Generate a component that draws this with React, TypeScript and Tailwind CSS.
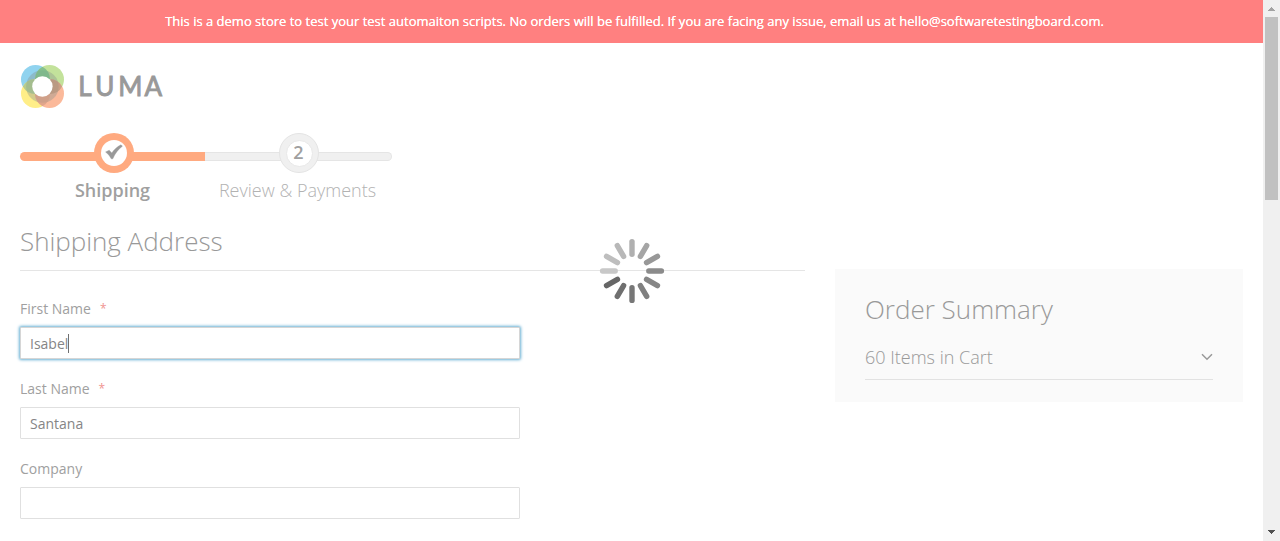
import React from "react";

const spokes = ["#8b8b8b", "#868686", "#808080", "#777777", "#6f6f6f", "#666666", "#c8c8c8", "#bebebe", "#b8b8b8", "#b0b0b0", "#a5a5a5", "#989898"];

function Logo() {
  return (
    <svg className="block" width="150" height="50" viewBox="20 62 150 50" role="img" aria-label="Luma">
      <circle cx="35.5" cy="79.5" r="14.5" fill="#90d3ef" />
      <circle cx="49.5" cy="79.5" r="14.5" fill="#c3e29b" />
      <circle cx="35.5" cy="93.5" r="14.5" fill="#ffee88" />
      <circle cx="49.5" cy="93.5" r="14.5" fill="#fbb99a" />
      <circle cx="42.4" cy="86.5" r="16.3" fill="#88948e" fillOpacity="0.38" />
      <path d="M42.5 66.8a14.5 14.5 0 0 1 0 25.4a14.5 14.5 0 0 1 0-25.4z" fill="#70b488" fillOpacity="0.75" />
      <path d="M42.5 80.8a14.5 14.5 0 0 1 0 25.4a14.5 14.5 0 0 1 0-25.4z" fill="#d09a82" fillOpacity="0.6" />
      <path d="M22.8 86.5a14.5 14.5 0 0 1 25.4 0a14.5 14.5 0 0 1-25.4 0z" fill="#86b492" fillOpacity="0.6" />
      <path d="M36.8 86.5a14.5 14.5 0 0 1 25.4 0a14.5 14.5 0 0 1-25.4 0z" fill="#ac9078" fillOpacity="0.6" />
      <circle cx="42.4" cy="86.5" r="10.2" fill="#fff" />
      <text x="78.2 95.3 118.2 144.6" y="95.6" fill="#999" stroke="#999" strokeWidth="0.9" fontFamily="Lato, sans-serif" fontWeight="400" fontSize="26">LUMA</text>
    </svg>
  );
}

function Spinner() {
  return (
    <svg className="absolute left-[599px] top-[238px]" width="66" height="66" viewBox="-33 -33 66 66">
      {spokes.map((c, i) => (
        <line key={i} x1="16.8" y1="0" x2="29.4" y2="0" stroke={c} strokeWidth="5.4" strokeLinecap="round" transform={`rotate(${i * 30})`} />
      ))}
    </svg>
  );
}

function Field({ label, value, required, focused }: { label: string; value: string; required?: boolean; focused?: boolean }) {
  return (
    <div className="mb-5 h-[60px] w-[500px]">
      <div className="mb-2 flex h-5 items-center text-[14px] leading-5 text-[#a0a0a0]">
        {label}
        {required && <span className="ml-[9px] text-[12px] text-[#f09490]">*</span>}
      </div>
      <div className={`flex h-8 items-center rounded-[1px] border bg-white px-[9px] text-[14px] text-[#858585] ${focused ? "border-[#d6d6d6] shadow-[0_0_3px_1px_#68b0d4]" : "border-[#e0e0e0]"}`}>
        <span>{value}</span>
        {focused && <span className="h-[19px] w-px bg-[#707070]" />}
      </div>
    </div>
  );
}

export default function App() {
  return (
    <div className="relative flex h-[541px] overflow-hidden bg-white font-['Open_Sans',sans-serif]">
      <div className="w-[1263px]">
        <div className="flex h-[43px] items-center justify-center bg-[#ff8080] pl-[6px] text-[13px] text-white [text-shadow:0_0_0.4px_#fff]">
          <span className="whitespace-nowrap">This is a demo store to test your test automaiton scripts. No orders will be fulfilled. If you are facing any issue, email us at hello@softwaretestingboard.com.</span>
        </div>
        <header className="h-[90px] pl-5 pt-[19px]">
          <Logo />
        </header>
        <div className="flex h-[94px] pl-5">
          <div className="relative w-[185px] pt-[19px] text-center">
            <div className="h-[9px] rounded-l-[6px] bg-[#ffaa80]" />
            <div className="absolute left-[74px] top-0 flex size-10 items-center justify-center rounded-full bg-[#ffaa80]">
              <div className="flex size-[26px] items-center justify-center rounded-full bg-white">
                <svg className="mb-[2px] mr-px" width="18" height="16" viewBox="0 0 18 16"><path d="M0.6 8L4.2 6.2L6.8 9C9 5.8 12.3 2.6 16 0.8L17.4 2.2C13.3 5.2 10 9.4 7.8 14.8H6.2C4.8 12 3 9.8 0.6 8Z" fill="#999" stroke="#999" strokeWidth="0.4" /></svg>
              </div>
            </div>
            <div className="mt-[16px] text-[18px] font-semibold leading-[26px] text-[#a0a0a0]">Shipping</div>
          </div>
          <div className="relative w-[187px] pt-[19px] text-center">
            <div className="h-[9px] rounded-r-[6px] border-y border-r border-[#e5e5e5] bg-[#f0f0f0]" />
            <div className="absolute left-[74px] top-0 flex size-10 items-center justify-center rounded-full border border-[#e4e4e4] bg-[#f0f0f0]">
              <div className="flex size-[27px] items-center justify-center rounded-full border border-[#e8e8e8] bg-white pr-px text-[18px] font-semibold text-[#a0a0a0]"><span className="-mt-[2px]">2</span></div>
            </div>
            <div className="mt-[16px] whitespace-nowrap pr-[2px] text-[18px] font-light leading-[26px] text-[#b2b2b2]">Review &amp; Payments</div>
          </div>
        </div>
        <div className="flex gap-[30px] pl-5">
          <main className="w-[785px]">
            <h2 className="mb-[28px] h-[44px] border-b border-[#e5e5e5] text-[26px] font-light leading-[29px] tracking-[-0.03px] text-[#999]">Shipping Address</h2>
            <Field label="First Name" value="Isabel" required focused />
            <Field label="Last Name" value="Santana" required />
            <Field label="Company" value="" />
          </main>
          <aside className="mt-[42px] h-[133px] w-[408px] bg-[#fafafa] px-[30px] pt-[22px]">
            <h2 className="text-[26px] font-light leading-[36px] text-[#999]">Order Summary</h2>
            <div className="mt-[7px] flex h-[46px] items-center justify-between border-b border-[#e2e2e2] pt-[2px] text-[18px] font-light text-[#999]">
              <span>60 Items in Cart</span>
              <svg className="mb-[2px]" width="12" height="8" viewBox="0 0 12 8"><path d="M1 1.2L6 6.2L11 1.2" fill="none" stroke="#999" strokeWidth="1.5" /></svg>
            </div>
          </aside>
        </div>
      </div>
      <div className="flex w-[17px] flex-col items-center bg-[#f0f0f0]">
        <svg className="block h-[17px] w-[17px] shrink-0" viewBox="0 0 17 17" shapeRendering="crispEdges"><path d="M5 11V10h1V9h1V8h1V7h1v1h1v1h1v1h1v1z" fill="#a3a3a3" /></svg>
        <div className="h-[183px] w-[13px] shrink-0 bg-[#c1c1c1]" />
        <div className="flex-1" />
        <svg className="block h-[17px] w-[17px] shrink-0" viewBox="0 0 17 17" shapeRendering="crispEdges"><path d="M5 6v1h1v1h1v1h1v1h1V9h1V8h1V7h1V6z" fill="#505050" /></svg>
      </div>
      <Spinner />
    </div>
  );
}
